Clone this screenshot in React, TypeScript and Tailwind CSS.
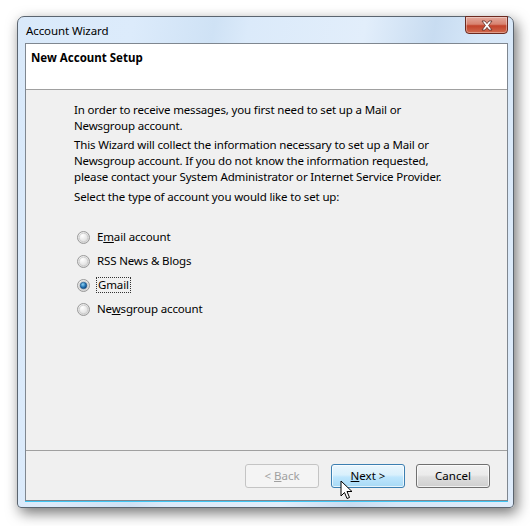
import React from "react";

function Radio({ checked }: { checked?: boolean }) {
  return (
    <svg width="13" height="13" viewBox="0 0 13 13" className="shrink-0">
      <defs>
        <radialGradient id={checked ? "rgc" : "rgu"} cx="40%" cy="35%" r="70%">
          <stop offset="0%" stopColor="#ffffff" />
          <stop offset="100%" stopColor="#d4d4d4" />
        </radialGradient>
        <radialGradient id="dot" cx="40%" cy="35%" r="70%">
          <stop offset="0%" stopColor="#8fd2f2" />
          <stop offset="60%" stopColor="#1e6fb0" />
          <stop offset="100%" stopColor="#0c3f78" />
        </radialGradient>
      </defs>
      <circle cx="6.5" cy="6.5" r="6" fill={`url(#${checked ? "rgc" : "rgu"})`} stroke="#9a9a9a" strokeWidth="1" />
      <circle cx="6.5" cy="6.5" r="4.3" fill="none" stroke="#c8c8c8" strokeWidth="0.8" />
      {checked && <circle cx="6.5" cy="6.5" r="3.3" fill="url(#dot)" stroke="#1a4f80" strokeWidth="0.6" />}
    </svg>
  );
}

export default function App() {
  const font = { fontFamily: '"Noto Sans", "Open Sans", sans-serif' };
  return (
    <div className="w-[530px] h-[526px] bg-white relative overflow-hidden" style={font}>
      <div className="absolute left-[17px] top-[16px] w-[497px] h-[492px] rounded-t-[7px] rounded-b-[4px] border border-[#5b6570] bg-[linear-gradient(100deg,#d9e9fa_0%,#dcebfb_20%,#cfe2f5_34%,#dbeafa_40%,#e2eefb_60%,#c8dcf1_72%,#d6e7f8_80%,#dfecfb_100%)] shadow-[3px_5px_14px_rgba(0,0,0,0.55)] flex flex-col">
        <div className="h-[26px] flex items-center pl-[8px] text-[11.5px] tracking-[-0.1px] text-black leading-none">
          <span className="mt-[1px]">Account Wizard</span>
        </div>
        <div className="absolute top-[-1px] right-[5px] w-[43px] h-[18px] rounded-b-[4px] border border-[#6b2a20] bg-[linear-gradient(#e3a89c_0%,#d88370_45%,#c2432b_55%,#d06a4e_100%)] flex items-center justify-center shadow-[inset_0_0_0_1px_rgba(255,255,255,0.35)]">
          <svg width="14" height="11" viewBox="0 0 14 11">
            <path d="M2 1 L5 1 L7 3.6 L9 1 L12 1 L8.6 5.5 L12 10 L9 10 L7 7.4 L5 10 L2 10 L5.4 5.5 Z" fill="#ffffff" stroke="#5a2a22" strokeWidth="0.8" />
          </svg>
        </div>
        <div className="ml-[7px] mr-[5px] mb-[6px] flex-1 border border-[#7f8790] flex flex-col shadow-[0_1px_0_#3fc6f3]">
          <div className="h-[46px] bg-white border-b border-[#a0a0a0] pl-[5px] pt-[6px]">
            <div className="text-[11.5px] font-bold leading-[16px] text-black">New Account Setup</div>
          </div>
          <div className="flex-1 bg-[#f0f0f0] pl-[48px] pt-[12px] text-[11.5px] tracking-[-0.15px] leading-[16px] text-black">
            <p>In order to receive messages, you first need to set up a Mail or<br />Newsgroup account.</p>
            <p className="mt-[3px]">This Wizard will collect the information necessary to set up a Mail or<br />Newsgroup account. If you do not know the information requested,<br />please contact your System Administrator or Internet Service Provider.</p>
            <p className="mt-[4px]">Select the type of account you would like to set up:</p>
            <div className="mt-[24px] ml-[3px] flex flex-col gap-[8px]">
              <div className="flex items-center gap-[7px] h-[16px]">
                <Radio />
                <span>E<u>m</u>ail account</span>
              </div>
              <div className="flex items-center gap-[7px] h-[16px]">
                <Radio />
                <span>RSS News &amp; Blogs</span>
              </div>
              <div className="flex items-center gap-[6px] h-[16px]">
                <Radio checked />
                <span className="border border-dotted border-[#333] px-[1px] leading-[14px]">Gmail</span>
              </div>
              <div className="flex items-center gap-[7px] h-[16px]">
                <Radio />
                <span>Ne<u>w</u>sgroup account</span>
              </div>
            </div>
          </div>
          <div className="h-[50px] bg-[#f0f0f0] border-t border-[#a0a0a0] flex justify-end items-start pt-[13px] pr-[17px] text-[11.5px]">
            <div className="w-[74px] h-[24px] rounded-[3px] border border-[#c4c4c4] bg-[#f4f4f4] text-[#a0a0a0] flex items-center justify-center">&lt; <u className="ml-[3px]">B</u>ack</div>
            <div className="ml-[12px] w-[74px] h-[24px] rounded-[3px] border border-[#3c7fb1] bg-[linear-gradient(#eaf6fd_0%,#d9f0fc_45%,#bee6fd_55%,#a7d9f5_100%)] text-black flex items-center justify-center shadow-[inset_0_0_0_1px_rgba(255,255,255,0.7)]"><u>N</u>ext &gt;</div>
            <div className="ml-[11px] w-[74px] h-[24px] rounded-[3px] border border-[#707070] bg-[linear-gradient(#f2f2f2_0%,#ebebeb_45%,#dddddd_55%,#cfcfcf_100%)] text-black flex items-center justify-center shadow-[inset_0_0_0_1px_rgba(255,255,255,0.7)]">Cancel</div>
          </div>
        </div>
      </div>
      <svg className="absolute left-[340px] top-[480px]" width="14" height="21" viewBox="0 0 14 21">
        <path d="M1 1 L1 16 L4.5 12.5 L7 18.5 L9.5 17.5 L7 11.5 L12 11.5 Z" fill="#ffffff" stroke="#000000" strokeWidth="1" strokeLinejoin="round" />
      </svg>
    </div>
  );
}
